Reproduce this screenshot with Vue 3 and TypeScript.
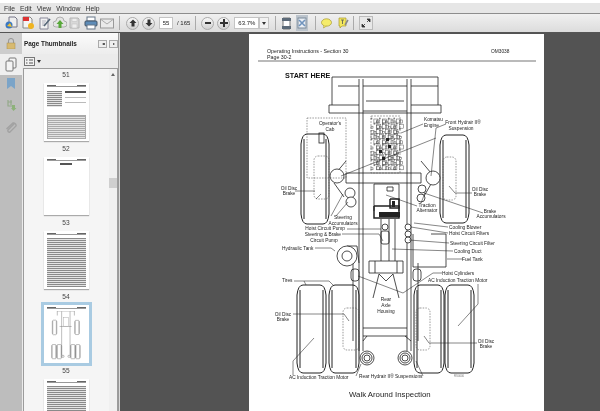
<script setup lang="ts">
/**
 * PDF reader window: menu, toolbar, thumbnails panel and the open page
 * Diagram coordinates are plain page pixels (viewBox starts at the page corner)
 */
interface Label {
  x: number
  y: number
  t: string
  a?: 'middle' | 'end'
}
interface Thumb {
  page: number
  kind: 'table' | 'blank' | 'text' | 'diagram'
}

const menus = ['File', 'Edit', 'View', 'Window', 'Help']

const thumbs: Thumb[] = [
  { page: 51, kind: 'text' },
  { page: 52, kind: 'table' },
  { page: 53, kind: 'blank' },
  { page: 54, kind: 'text' },
  { page: 55, kind: 'diagram' },
  { page: 56, kind: 'text' },
]

const labels: Label[] = [
  { x: 329, y: 124, t: "Operator's", a: 'middle' },
  { x: 329, y: 130, t: 'Cab', a: 'middle' },
  { x: 288, y: 189, t: 'Oil Disc', a: 'middle' },
  { x: 288, y: 194, t: 'Brake', a: 'middle' },
  { x: 342, y: 218, t: 'Steering', a: 'middle' },
  { x: 342, y: 224, t: 'Accumulators', a: 'middle' },
  { x: 344, y: 229, t: 'Hoist Circuit Pump', a: 'end' },
  { x: 340, y: 235, t: 'Steering & Brake', a: 'end' },
  { x: 323, y: 241, t: 'Circuit Pump', a: 'middle' },
  { x: 281, y: 249, t: 'Hydraulic Tank' },
  { x: 281, y: 281, t: 'Tires' },
  { x: 282, y: 315, t: 'Oil Disc', a: 'middle' },
  { x: 282, y: 320, t: 'Brake', a: 'middle' },
  { x: 288, y: 378, t: 'AC Induction Traction Motor' },
  { x: 358, y: 377, t: 'Rear Hydrair II® Suspensions' },
  { x: 385, y: 300, t: 'Rear', a: 'middle' },
  { x: 385, y: 306, t: 'Axle', a: 'middle' },
  { x: 385, y: 312, t: 'Housing', a: 'middle' },
  { x: 423, y: 120, t: 'Komatsu' },
  { x: 423, y: 126, t: 'Engine' },
  { x: 462, y: 123, t: 'Front Hydrair II®', a: 'middle' },
  { x: 460, y: 129, t: 'Suspension', a: 'middle' },
  { x: 479, y: 190, t: 'Oil Disc', a: 'middle' },
  { x: 479, y: 195, t: 'Brake', a: 'middle' },
  { x: 426, y: 206, t: 'Traction', a: 'middle' },
  { x: 426, y: 211, t: 'Alternator', a: 'middle' },
  { x: 489, y: 212, t: 'Brake', a: 'middle' },
  { x: 490, y: 217, t: 'Accumulators', a: 'middle' },
  { x: 448, y: 228, t: 'Cooling Blower' },
  { x: 448, y: 234, t: 'Hoist Circuit Filters' },
  { x: 449, y: 244, t: 'Steering Circuit Filter' },
  { x: 453, y: 252, t: 'Cooling Duct' },
  { x: 461, y: 260, t: 'Fuel Tank' },
  { x: 441, y: 274, t: 'Hoist Cylinders' },
  { x: 427, y: 281, t: 'AC Induction Traction Motor' },
  { x: 485, y: 342, t: 'Oil Disc', a: 'middle' },
  { x: 485, y: 347, t: 'Brake', a: 'middle' },
]

// leaders and frame lines, each one a polyline
const leaders = [
  '294,190 314,190', '315,198 320,193',
  '422,123 400,132', '445,123 435,127 430,175', '435,137 340,175',
  '471,192 454,192 448,185', '482,212 423,192', '385,194 416,205', '424,192 420,202',
  '335,215 347,201', '330,215 342,193',
  '346,228 380,228', '341,233 378,233 382,240', '314,247 330,247 334,250',
  '293,280 328,280 332,284', '303,280 305,284',
  '292,313 343,313 348,320', '292,374 292,360 313,337',
  '355,375 360,363', '422,375 415,360',
  '441,272 432,272 402,292 357,275',
  '452,250 391,248', '462,258 446,258', '447,226 413,222', '447,232 410,226', '448,242 408,239',
  '477,283 477,303 457,325', '476,342 428,342 423,335',
]

const frame = [
  '331,104 331,76 437,76 437,104', '328,104 328,112 440,112 440,104', '328,104 358,104', '410,104 440,104',
  '337,85 358,85', '362,85 406,85', '410,85 437,85',
  '358,78 358,350', '362,78 362,350', '406,78 406,350', '410,78 410,350', '352,262 352,340', '417,262 417,340',
  '345,172 420,172 420,182 345,182 345,172',
  '365,100 403,100', '362,110 406,110',
  '345,160 335,172', '420,160 430,172', '333,182 343,196', '430,183 422,197',
  '373,183 398,183 398,210', '373,183 373,210', '386,186 392,186 392,190 386,190 386,186',
  '380,218 380,260', '388,218 388,260', '394,218 394,260',
  '368,260 402,260 402,272 368,272 368,260', '374,260 374,272', '396,260 396,272',
  '372,297 378,273', '398,297 392,273', '378,273 385,280 392,273',
  '362,327 406,327', '362,335 406,335', '404,335 410,340', '362,340 366,335',
  '430,233 445,233 445,266 412,266', '412,233 412,266',
  '346,245 356,245 358,262',
]

const frameHeavy = [
  '373,205 398,205 398,217 373,217 373,205', '389,198 398,198 398,207 389,207 389,198',
]

// rounded tyres: x, width, top, height
const tires = [
  { x: 300, w: 28, y: 133, h: 90 }, { x: 439, w: 29, y: 134, h: 88 },
  { x: 296, w: 29, y: 284, h: 88 }, { x: 328, w: 30, y: 284, h: 88 },
  { x: 413, w: 30, y: 284, h: 88 }, { x: 444, w: 29, y: 284, h: 88 },
]
function tirePath(t: { x: number; w: number; y: number; h: number }) {
  const r = t.x + t.w
  const b = t.y + t.h
  return `M${t.x + 6} ${t.y}H${r - 6}Q${r - 1} ${t.y} ${r} ${t.y + 10}V${b - 10}Q${r - 1} ${b} ${r - 6} ${b}H${t.x + 6}Q${t.x + 1} ${b} ${t.x} ${b - 10}V${t.y + 10}Q${t.x + 1} ${t.y} ${t.x + 6} ${t.y}Z`
    + `M${t.x + 3} ${t.y + 5}V${b - 5}M${r - 3} ${t.y + 5}V${b - 5}`
}

const dashed = [
  { x: 306, y: 117, w: 39, h: 60, r: 0 },
  { x: 313, y: 155, w: 15, h: 43, r: 4 },
  { x: 442, y: 156, w: 13, h: 43, r: 4 },
  { x: 342, y: 307, w: 16, h: 42, r: 4 },
  { x: 415, y: 307, w: 14, h: 42, r: 4 },
]

const circles = [
  [336, 175, 7], [432, 177, 7], [421, 188, 4], [420, 197, 4], [349, 192, 5], [350, 201, 5],
  [346, 255, 10], [346, 255, 5], [407, 226, 3], [407, 233, 3], [407, 239, 3],
  [366, 357, 7], [366, 357, 5], [366, 357, 3], [404, 357, 7], [404, 357, 5], [404, 357, 3],
  [384, 226, 3],
]

const solids = [
  [385, 137, 3, 3], [387, 144, 3, 3], [378, 149, 3, 3], [381, 156, 3, 3], [378, 211, 21, 5], [391, 200, 3, 6],
]

// engine bay is a dense mess of small parts, generated so it looks busy without listing each one
const engineParts = Array.from({ length: 150 }, (_, i) => {
  const col = i % 15
  const row = Math.floor(i / 15)
  return {
    x: 370 + col * 1.9 + ((i * 7) % 3),
    y: 117 + row * 5.2 + ((i * 5) % 4),
    w: 1 + ((i * 3) % 4),
    h: 1 + ((i * 11) % 4),
  }
})
</script>

<template>
  <div class="app">
    <div class="titlebar"></div>
    <nav class="menu">
      <span v-for="m in menus" :key="m">{{ m }}</span>
    </nav>

    <div class="toolbar">
      <svg class="tb" width="13" height="14" viewBox="0 0 13 14"><path d="M4 1h6l2 2v8H4z" fill="#eee" stroke="#778"/><circle cx="4" cy="9" r="3.5" fill="#3b78c2"/><path d="M2 10l3-3 2 4z" fill="#f2c230"/></svg>
      <svg class="tb" width="13" height="14" viewBox="0 0 13 14"><path d="M1 1h7l2 2v9H1z" fill="#f4f4f4" stroke="#888"/><rect x="1" y="1" width="6" height="4" fill="#d33"/><circle cx="9" cy="10" r="3" fill="#f0b420"/></svg>
      <svg class="tb" width="12" height="14" viewBox="0 0 12 14"><path d="M1 2h8v11H1z" fill="#f2f2f2" stroke="#889"/><path d="M3 5h4M3 7h3M3 9h3" stroke="#99a" stroke-width=".7"/><path d="M5 10l6-7" stroke="#567" stroke-width="1.6"/></svg>
      <svg class="tb tb--tight" width="14" height="14" viewBox="0 0 14 14"><path d="M3 11a3 3 0 0 1 0-6 4 4 0 0 1 8 0 3 3 0 0 1 0 6z" fill="#e4e4e4" stroke="#999" stroke-width=".7"/><path d="M7 4l3.5 4H8.5v4h-3V8H3.500z" fill="#58a83a"/></svg>
      <svg class="tb" width="11" height="14" viewBox="0 0 11 14"><path d="M1 2h8l1 1v9H1z" fill="#d8d8d8" stroke="#b4b4b4"/><rect x="3" y="2.500" width="5" height="3" fill="#ededed" stroke="#bbb" stroke-width=".5"/><rect x="3" y="8" width="5" height="4" fill="#ededed" stroke="#bbb" stroke-width=".5"/></svg>
      <svg class="tb" width="14" height="14" viewBox="0 0 14 14"><rect x="3" y="1" width="8" height="4" fill="#fff" stroke="#678"/><rect x="1" y="5" width="12" height="5" rx="1" fill="#5d8cb8" stroke="#456"/><rect x="3" y="9" width="8" height="4" fill="#fff" stroke="#678"/></svg>
      <svg class="tb tb--tight" width="14" height="14" viewBox="0 0 14 14"><rect x=".5" y="3" width="13" height="9" fill="#eaeaea" stroke="#999"/><path d="M1 3.500l6 4.500 6-4.500" fill="none" stroke="#aaa"/></svg>
      <i class="sep sep--nav"></i>
      <button class="round"><svg width="8" height="8" viewBox="0 0 8 8"><path d="M4 .5L7.500 4H5.500v3.500h-3V4H.5z" fill="#333"/></svg></button>
      <button class="round"><svg width="8" height="8" viewBox="0 0 8 8"><path d="M4 7.500L7.500 4H5.500V.5h-3V4H.5z" fill="#333"/></svg></button>
      <span class="field field--page">55</span>
      <span class="count">/ 165</span>
      <i class="sep"></i>
      <button class="round"><svg width="8" height="8" viewBox="0 0 8 8"><rect x="1" y="3" width="6" height="2" fill="#333"/></svg></button>
      <button class="round"><svg width="8" height="8" viewBox="0 0 8 8"><path d="M3 0h2v3h3v2H5v3H3V5H0V3h3z" fill="#333"/></svg></button>
      <span class="field field--zoom">63.7%</span>
      <span class="drop"><i></i></span>
      <i class="sep sep--fit"></i>
      <svg class="tb" width="11" height="13" viewBox="0 0 11 13"><path d="M2 1h7v11H2z" fill="#fff" stroke="#777"/><rect x="1" y="1" width="9" height="3" fill="#5c6a78"/><rect x="1" y="9" width="9" height="3" fill="#5c6a78"/></svg>
      <span class="tb-box"><svg width="10" height="12" viewBox="0 0 10 12"><rect x="1" y="1" width="8" height="10" fill="#e9eef4" stroke="#7a8a9a"/><path d="M2 3l6 6M8 3L2 9" stroke="#6f93bd" stroke-width="1.600"/></svg></span>
      <i class="sep sep--note"></i>
      <svg class="tb" width="11" height="11" viewBox="0 0 11 11"><ellipse cx="5.500" cy="4.500" rx="5" ry="3.700" fill="#f5ec6a" stroke="#a89a30" stroke-width=".7"/><path d="M3 7.500L2.500 10 5.500 8" fill="#f5ec6a" stroke="#a89a30" stroke-width=".6"/></svg>
      <svg class="tb tb--note" width="11" height="12" viewBox="0 0 11 12"><path d="M1 1h7v8H4L2 11V9H1z" fill="#f3e75c" stroke="#a89a30" stroke-width=".7"/><path d="M3 3h3M4.500 3v4" stroke="#665" stroke-width=".9"/><path d="M7 8l3-5" stroke="#888" stroke-width="1.500"/></svg>
      <i class="sep sep--last"></i>
      <span class="expand"><svg width="10" height="10" viewBox="0 0 10 10"><path d="M1 9V6l3 3zM9 1v3L6 1zM2 8l2-2M8 2L6 4" fill="#333" stroke="#333" stroke-width=".8"/></svg></span>
    </div>

    <div class="main">
      <aside class="rail">
        <div class="rail__lock">
          <svg width="10" height="11" viewBox="0 0 10 11"><path d="M2.500 5V3a2.500 2.500 0 0 1 5 0v2" fill="none" stroke="#999" stroke-width="1.100"/><rect x="1" y="5" width="8" height="6" fill="#d8ba70" stroke="#a89050" stroke-width=".5"/></svg>
        </div>
        <div class="rail__tab">
          <svg width="12" height="15" viewBox="0 0 12 15"><rect x="4" y="1" width="7" height="10" rx="1" fill="#f4f4f4" stroke="#777"/><rect x="1" y="4" width="7" height="10" rx="1" fill="#f4f4f4" stroke="#777"/></svg>
        </div>
        <div class="rail__icons">
          <svg width="10" height="13" viewBox="0 0 10 13"><path d="M1 1h8v11L5 9 1 12z" fill="#7ba4c8"/></svg>
          <svg width="11" height="13" viewBox="0 0 11 13"><path d="M2 1v6h5M2 3h4M5 1v5" fill="none" stroke="#94a98a" stroke-width="1.200"/><path d="M6 6h3v3h1.500L7.500 12 5 9h1z" fill="#8db27a"/></svg>
          <svg width="12" height="13" viewBox="0 0 12 13"><path d="M10 2L3 9a1.500 1.500 0 0 0 2 2l6-6a2.500 2.500 0 0 0-3-3L1.500 8" fill="none" stroke="#a2a2a2" stroke-width="1.400"/></svg>
        </div>
      </aside>

      <section class="panel">
        <header class="panel__head">
          <span class="panel__title">Page Thumbnails</span>
          <span class="mini">◂◂</span>
          <span class="mini">▸</span>
        </header>
        <div class="panel__options">
          <svg width="12" height="9" viewBox="0 0 12 9"><rect x=".5" y=".5" width="10" height="8" fill="#f2f2f2" stroke="#777"/><path d="M2 3h1.500M2 6h1.500M5 3h4M5 6h4" stroke="#555"/></svg>
          <i class="caret"></i>
        </div>
        <div class="list">
          <div class="list__pages">
            <div v-for="t in thumbs" :key="t.page" class="item" :class="{ 'item--on': t.kind === 'diagram' }">
              <div class="thumb">
                <div class="thumb__head"><b></b><b></b></div>
                <template v-if="t.kind === 'table'">
                  <div class="thumb__cols"><div class="lines"></div><div class="thumb__form"></div></div>
                  <div class="thumb__table"></div>
                </template>
                <div v-else-if="t.kind === 'blank'" class="thumb__title"></div>
                <div v-else-if="t.kind === 'text'" class="lines lines--full"></div>
                <svg v-else class="thumb__art" viewBox="296 76 178 310">
                  <g fill="none" stroke="#777" stroke-width="3">
                    <path v-for="(tt, i) in tires" :key="i" :d="tirePath(tt)" />
                    <polyline points="331,104 331,76 437,76 437,104" />
                    <path d="M358 78V350M410 78V350M345 172H420" />
                    <rect x="370" y="116" width="30" height="56" stroke="#aaa" />
                    <circle cx="366" cy="357" r="7" /><circle cx="404" cy="357" r="7" />
                  </g>
                </svg>
              </div>
              <span v-if="t.page < 56" class="item__num">{{ t.page }}</span>
            </div>
          </div>
          <div class="scroll">
            <i class="scroll__up"></i>
            <i class="scroll__thumb"></i>
          </div>
        </div>
      </section>
      <div class="splitter"></div>

      <main class="viewer">
        <div class="page">
          <svg class="sheet" width="295" height="378" viewBox="248 33 295 378" font-family="'Liberation Sans', Arial, sans-serif">
            <text x="266" y="52" font-size="5.300" fill="#222">Operating Instructions - Section 30</text>
            <text x="266" y="58" font-size="5.300" fill="#222">Page 30-2</text>
            <text x="490" y="52" font-size="4.800" fill="#222">OM3038</text>
            <rect x="257" y="59.500" width="278" height="1" fill="#777" />
            <text x="284" y="77" font-size="7.200" font-weight="700" fill="#111">START HERE</text>

            <g fill="none" stroke="#222" stroke-width=".8">
              <path v-for="(t, i) in tires" :key="i" :d="tirePath(t)" stroke-width="1" />
              <polyline v-for="(p, i) in frame" :key="i" :points="p" />
              <polyline v-for="(p, i) in frameHeavy" :key="i" :points="p" stroke-width="1.500" />
              <circle v-for="(c, i) in circles" :key="i" :cx="c[0]" :cy="c[1]" :r="c[2]" fill="#fff" />
              <rect v-for="(d, i) in dashed" :key="i" :x="d.x" :y="d.y" :width="d.w" :height="d.h" :rx="d.r" stroke-dasharray="1.500 1.200" stroke="#555" stroke-width=".6" />
              <rect x="318" y="132" width="5" height="10" />
              <rect x="350" y="268" width="8" height="12" rx="3" />
              <rect x="412" y="268" width="8" height="12" rx="3" />
              <rect x="380" y="230" width="8" height="13" rx="2" />
            </g>

            <g fill="none" stroke="#555" stroke-width=".5">
              <rect x="370" y="115" width="29" height="57" stroke-dasharray="2 1" />
              <rect v-for="(e, i) in engineParts" :key="i" :x="e.x" :y="e.y" :width="e.w" :height="e.h" />
            </g>
            <rect v-for="(s, i) in solids" :key="i" :x="s[0]" :y="s[1]" :width="s[2]" :height="s[3]" fill="#222" />

            <g fill="none" stroke="#222" stroke-width=".55">
              <polyline v-for="(p, i) in leaders" :key="i" :points="p" />
            </g>

            <text
              v-for="l in labels"
              :key="l.t + l.y"
              :x="l.x"
              :y="l.y"
              :text-anchor="l.a || 'start'"
              font-size="4.800"
              fill="#222"
            >{{ l.t }}</text>
            <text x="453" y="376" font-size="2.800" fill="#777">RS0000</text>
            <text x="348" y="396" font-size="7.800" fill="#222">Walk Around Inspection</text>
          </svg>
        </div>
      </main>
    </div>
  </div>
</template>

<style scoped>
.app {
  width: 600px;
  height: 411px;
  overflow: hidden;
  display: flex;
  flex-direction: column;
  font-family: "Liberation Sans", Arial, sans-serif;
  color: #222;
  filter: blur(0.4px);
}

.titlebar {
  height: 3px;
  background: #fff;
}

.menu {
  height: 10px;
  display: flex;
  align-items: center;
  gap: 5px;
  padding-left: 4px;
  background: #e6e6e6;
  font-size: 6.800px;
  color: #333;
  border-bottom: 1px solid #8d8d8d;
}

.toolbar {
  height: 18px;
  display: flex;
  align-items: center;
  padding-left: 5px;
  background: linear-gradient(#f0f0f0, #dcdcdc);
  border-bottom: 1px solid #555;
}

.tb {
  margin-right: 4px;
  flex-shrink: 0;
}

.tb--tight {
  margin-left: -2px;
  margin-right: 2px;
}

.tb--note {
  margin-left: 2px;
}

.sep {
  width: 1px;
  height: 14px;
  background: #aaa;
  margin: 0 5px 0 3px;
  flex-shrink: 0;
}

.sep--nav {
  margin-right: 6px;
}

.sep--fit {
  margin: 0 5px 0 6px;
}

.sep--note {
  margin: 0 5px 0 5px;
}

.sep--last {
  margin: 0 5px 0 0;
}

.round {
  width: 13px;
  height: 13px;
  margin-right: 3px;
  padding: 0;
  border: 1px solid #aaa;
  border-radius: 50%;
  background: linear-gradient(#f8f8f8, #d0d0d0);
  display: flex;
  align-items: center;
  justify-content: center;
}

.field {
  height: 12px;
  display: flex;
  align-items: center;
  justify-content: center;
  background: #fff;
  border: 1px solid #c4c4c4;
  box-sizing: border-box;
  font-size: 6px;
}

.field--page {
  width: 14px;
  margin-left: 1px;
}

.field--zoom {
  width: 25px;
  margin-left: 1px;
}

.count {
  font-size: 6px;
  margin: 0 2px 0 4px;
  white-space: nowrap;
}

.drop {
  width: 10px;
  height: 12px;
  background: #f2f2f2;
  border: 1px solid #c4c4c4;
  box-sizing: border-box;
  display: flex;
  align-items: center;
  justify-content: center;
}

.drop i,
.caret {
  border-left: 2px solid transparent;
  border-right: 2px solid transparent;
  border-top: 3px solid #333;
}

.tb-box {
  width: 12px;
  height: 16px;
  margin-right: 2px;
  background: #bcc4cc;
  display: flex;
  align-items: center;
  justify-content: center;
}

.expand {
  width: 14px;
  height: 14px;
  border: 1px solid #bbb;
  box-sizing: border-box;
  background: #e8e8e8;
  display: flex;
  align-items: center;
  justify-content: center;
}

.main {
  flex: 1;
  display: flex;
  min-height: 0;
}

.rail {
  width: 22px;
  display: flex;
  flex-direction: column;
  background: #bdbdbd;
  flex-shrink: 0;
}

.rail__lock {
  height: 21px;
  background: #cdcdcd;
  display: flex;
  align-items: center;
  justify-content: center;
}

.rail__tab {
  height: 21px;
  background: #efefef;
  display: flex;
  align-items: center;
  justify-content: center;
}

.rail__icons {
  display: flex;
  flex-direction: column;
  align-items: center;
  gap: 9px;
  padding-top: 2px;
}

.panel {
  width: 96px;
  display: flex;
  flex-direction: column;
  background: #ebebeb;
  flex-shrink: 0;
}

.panel__head {
  height: 21px;
  display: flex;
  align-items: center;
  gap: 2px;
  padding: 0 0 0 2px;
  background: linear-gradient(#fbfbfb, #ededed);
}

.panel__title {
  flex: 1;
  font-size: 6.400px;
  font-weight: 700;
}

.mini {
  width: 9px;
  height: 8px;
  display: flex;
  align-items: center;
  justify-content: center;
  border: 1px solid #aaa;
  box-sizing: border-box;
  font-size: 4px;
  background: #eee;
  color: #333;
  white-space: nowrap;
  letter-spacing: -1px;
}

.panel__options {
  height: 14px;
  display: flex;
  align-items: center;
  gap: 1px;
  padding-left: 2px;
}

.list {
  flex: 1;
  min-height: 0;
  margin-left: 1px;
  border: 1px solid #9c9c9c;
  border-bottom: 0;
  background: #f5f5f5;
  display: flex;
  overflow: hidden;
}

.list__pages {
  flex: 1;
  margin-top: -63px;
  display: flex;
  flex-direction: column;
  align-items: center;
}

.item {
  width: 52px;
  height: 74px;
  flex-shrink: 0;
  padding-top: 3px;
  box-sizing: border-box;
  display: flex;
  flex-direction: column;
  align-items: center;
  margin-left: -1px;
}

.item__num {
  height: 13px;
  line-height: 16px;
  font-size: 6.600px;
  color: #444;
}

.item--on .thumb {
  box-shadow: 0 0 0 3px #a9cbe2;
}

.thumb {
  width: 45px;
  height: 58px;
  flex-shrink: 0;
  padding: 2px 3px;
  box-sizing: border-box;
  background: #fff;
  box-shadow: 0 1px 1px #aaa;
  display: flex;
  flex-direction: column;
  gap: 2px;
  overflow: hidden;
}

.thumb__head {
  height: 1px;
  display: flex;
  justify-content: space-between;
  border-bottom: 1px solid #999;
}

.thumb__head b {
  width: 9px;
  height: 1px;
  background: #666;
}

.thumb__cols {
  height: 16px;
  display: flex;
  gap: 3px;
  margin-top: 2px;
}

.thumb__cols .lines {
  width: 15px;
  flex-shrink: 0;
}

.thumb__form {
  flex: 1;
  background: linear-gradient(#555 0 2px, transparent 2px 6px, #bbb 6px 7px, transparent 7px 11px, #bbb 11px 12px, transparent 12px);
}

.thumb__table {
  height: 22px;
  margin-top: 6px;
  border: 1px solid #aaa;
  background: repeating-linear-gradient(#aaa 0 1px, #e4e4e4 1px 2px);
}

.thumb__title {
  width: 12px;
  height: 2px;
  background: #555;
  align-self: center;
}

.lines {
  background: repeating-linear-gradient(#8a8a8a 0 1px, #e4e4e4 1px 2px);
}

.lines--full {
  height: 50px;
  margin-top: 1px;
}

.thumb__art {
  width: 38px;
  height: 50px;
}

.scroll {
  width: 8px;
  flex-shrink: 0;
  background: #f0f0f0;
  display: flex;
  flex-direction: column;
  align-items: center;
  padding-top: 4px;
}

.scroll__up {
  border-left: 2.500px solid transparent;
  border-right: 2.500px solid transparent;
  border-bottom: 3px solid #666;
}

.scroll__thumb {
  width: 8px;
  height: 10px;
  margin-top: 102px;
  background: #cfcfcf;
}

.splitter {
  width: 1px;
  background: #d8d8d8;
  border-left: 1px solid #999;
  flex-shrink: 0;
}

.viewer {
  flex: 1;
  min-width: 0;
  background: #535353;
  padding: 1px 0 0 129px;
  overflow: hidden;
}

.page {
  width: 295px;
  height: 378px;
  background: #fff;
}

.sheet {
  display: block;
}
</style>

<style>
html,
body {
  margin: 0;
  background: #535353;
}
</style>
